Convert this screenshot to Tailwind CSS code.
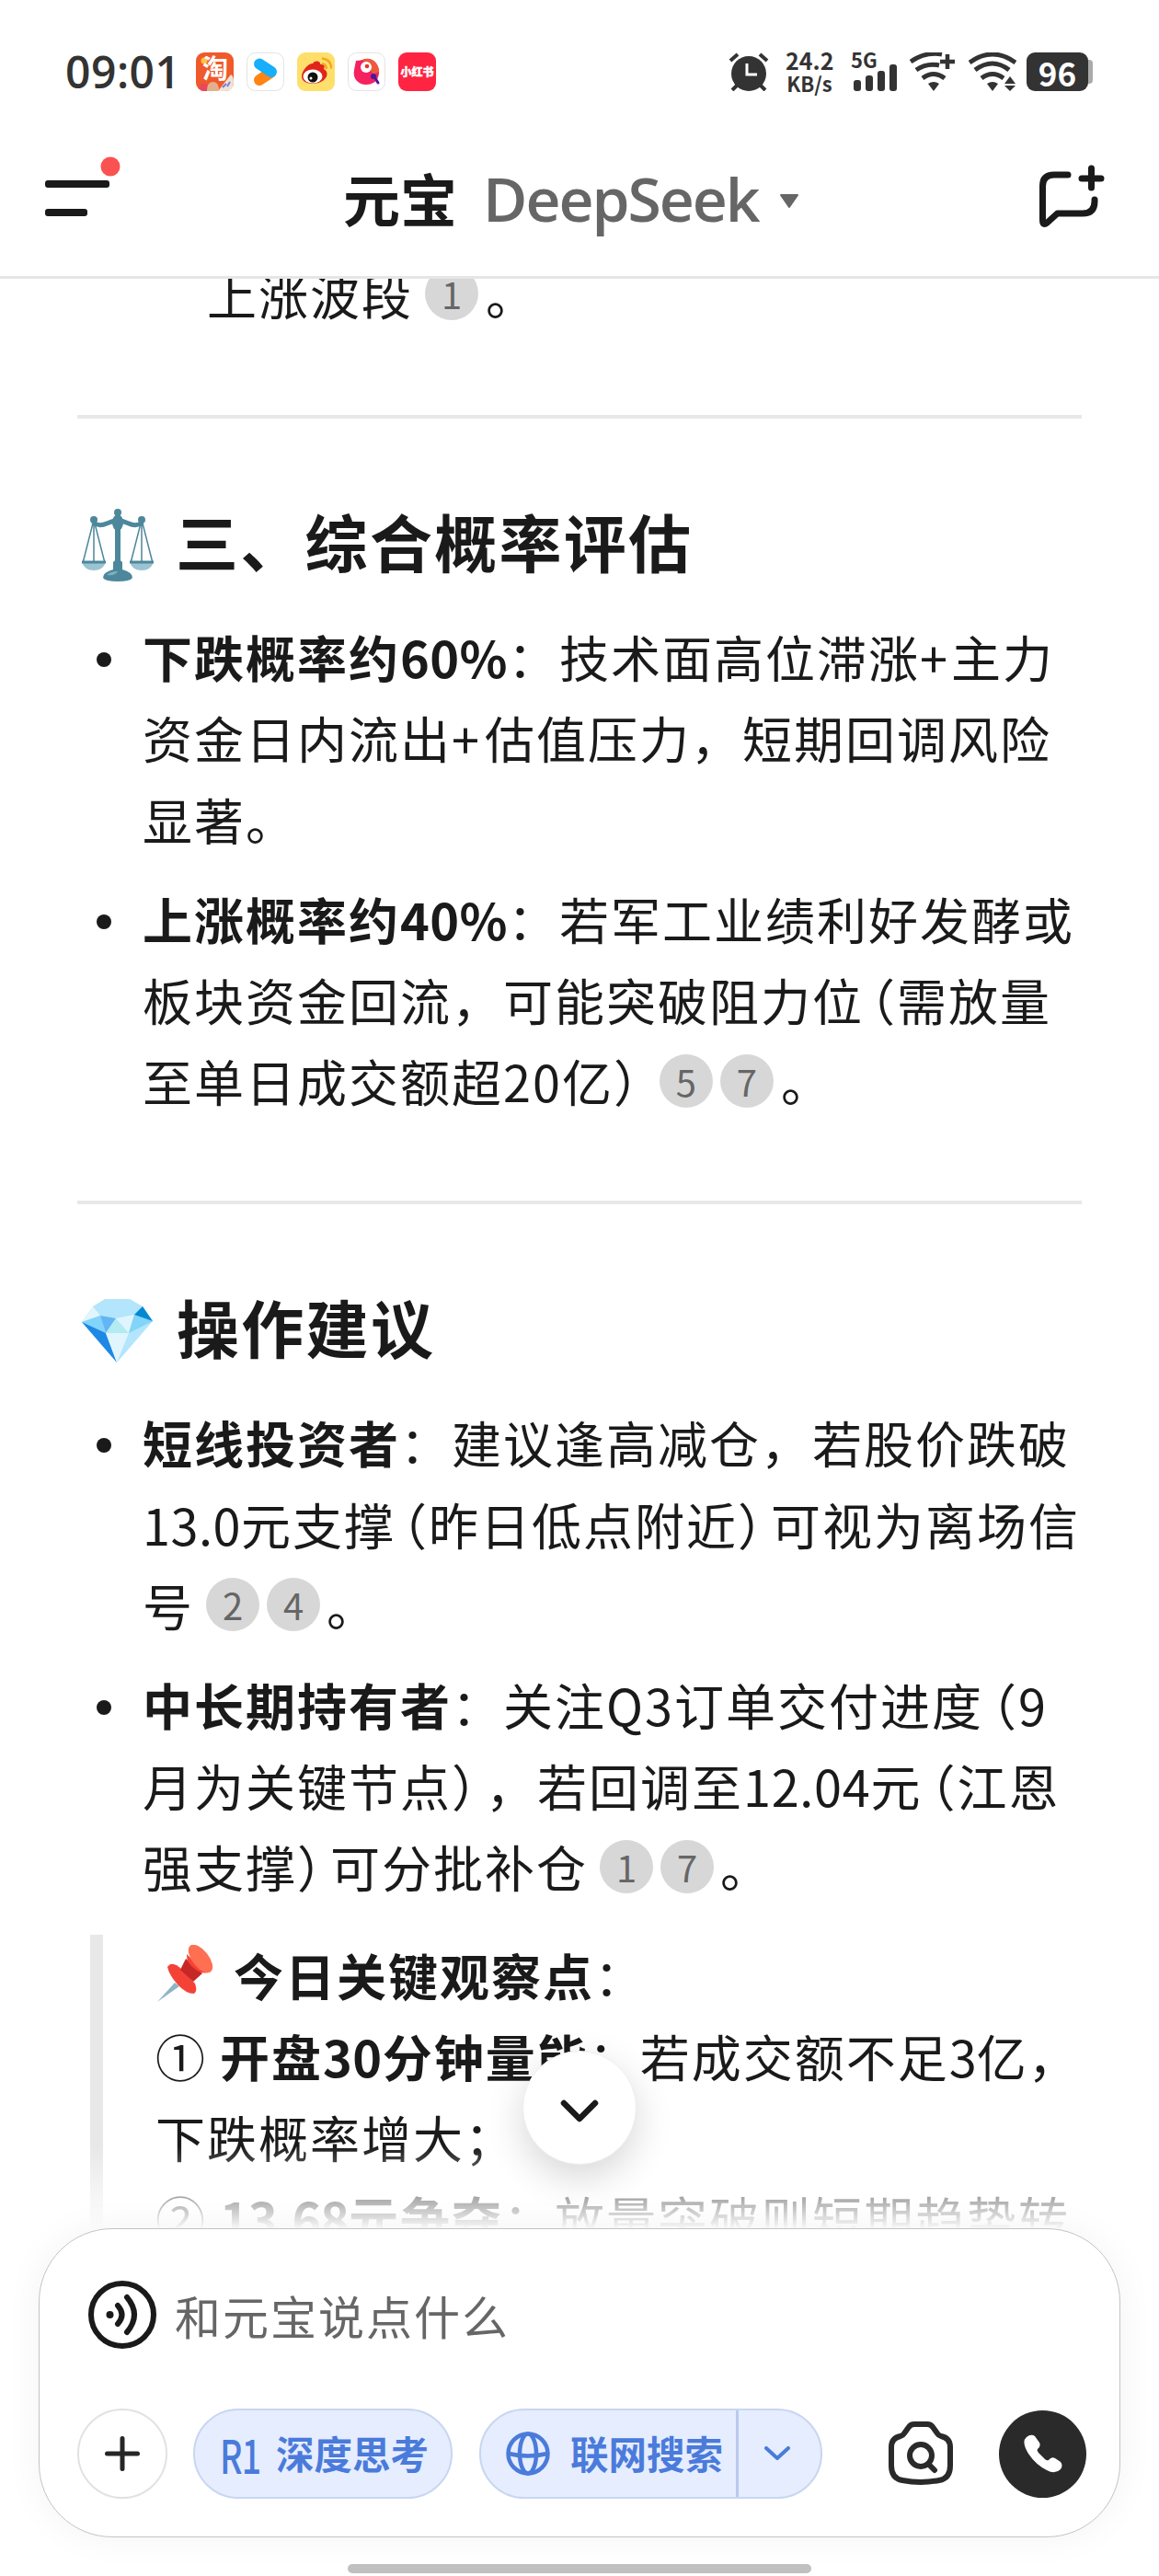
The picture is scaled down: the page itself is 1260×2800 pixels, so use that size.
<!DOCTYPE html>
<html lang="zh-CN">

<head>
    <meta charset="UTF-8">
    <meta name="viewport" content="width=device-width, initial-scale=1.0">
    <title>元宝</title>
    <!-- Tailwind CSS -->
    <script src="https://cdn.jsdelivr.net/npm/@tailwindcss/browser@4"></script>
</head>

<body class="bg-white font-['Noto_Sans_CJK_SC',sans-serif] text-[#1a1a1a]">
    <div class="relative flex h-[2800px] w-[1260px] flex-col overflow-hidden">

        <!-- Status bar -->
        <div class="flex h-[156px] shrink-0 items-center pl-[71px] pr-[70px] text-[#333]">
            <span class="w-[142px] whitespace-nowrap font-['Open_Sans',sans-serif] text-[48px] font-semibold leading-none tracking-[0.500px]">09:01</span>
            <div class="flex gap-[14px]">
                <svg class="h-[42px] w-[41px]" viewBox="0 0 41 42">
                    <rect width="41" height="42" rx="9" fill="#f0592b" />
                    <circle cx="9" cy="9" r="3.500" fill="#ffc53d" />
                    <text x="21" y="28" text-anchor="middle" font-size="28" font-weight="700" fill="#fff">淘</text>
                    <path d="M4 39q0-6 6-5l4 2 1 6H8q-3 0-4-3z" fill="#e8475e" />
                    <path d="M12 41q0-9 7-9 6 0 6 10H12z" fill="#e2b18a" />
                    <path d="M24 42 38 24q3 2 3 8 0 10-9 10z" fill="#efe2d6" />
                    <path d="m29 38 4-4M34 37l3-5" stroke="#7a7fd0" stroke-width="2" />
                </svg>
                <svg class="h-[42px] w-[41px]" viewBox="0 0 41 42">
                    <rect x=".5" y=".5" width="40" height="41" rx="9" fill="#fff" stroke="#e3e3e3" />
                    <path d="M14 30 26 22" stroke="#ff8412" stroke-width="12" stroke-linecap="round" />
                    <path d="M14 12.500 27 21" stroke="#17aefc" stroke-width="12" stroke-linecap="round" />
                </svg>
                <svg class="h-[42px] w-[41px]" viewBox="0 0 41 42">
                    <rect width="41" height="42" rx="9" fill="#ffdf6b" />
                    <path d="M5 26c0-6 7-14 12-14 2-4 9-3 8 1 4-1 6 1 4 5 4 2 5 7 1 11-6 7-25 7-25-3z" fill="#e1251b" />
                    <ellipse cx="17" cy="26" rx="10.500" ry="7.500" fill="#fff" />
                    <circle cx="17" cy="27" r="5.500" fill="#111" />
                    <circle cx="15" cy="28" r="1.500" fill="#fff" />
                    <path d="M27 6.500q10 1 10 11M27 12q5 1 5 6" fill="none" stroke="#f6a623" stroke-width="2.500" />
                </svg>
                <svg class="h-[42px] w-[41px]" viewBox="0 0 41 42">
                    <rect x=".5" y=".5" width="40" height="41" rx="9" fill="#fff" stroke="#e3e3e3" />
                    <path d="M9 9q4 0 7-1c10-4 19 4 18 15-1 9-8 12-14 12-8 0-15-6-13-16q1-5 2-10z" fill="#f5225f" />
                    <path d="M16 8c9-4 18 3 18 13l-6 3z" fill="#ee5a3c" />
                    <circle cx="20" cy="16" r="6" fill="#fff" />
                    <circle cx="21" cy="15" r="2.300" fill="#e5352c" />
                    <path d="m28 25 5 8" stroke="#4b1a9c" stroke-width="3" stroke-linecap="round" />
                    <circle cx="28" cy="26" r="3" fill="#4b1a9c" />
                </svg>
                <svg class="h-[42px] w-[41px]" viewBox="0 0 41 42">
                    <rect width="41" height="42" rx="9" fill="#ff2442" />
                    <text x="20.500" y="26" text-anchor="middle" font-size="12" font-weight="900" fill="#fff" stroke="#fff" stroke-width=".4">小红书</text>
                </svg>
            </div>

            <div class="ml-auto flex items-center">
                <svg class="h-[42px] w-[44px]" viewBox="0 0 44 42" fill="none" stroke="#333">
                    <circle cx="22" cy="23" r="19" fill="#333" stroke="none" />
                    <path d="M2 9 10 2M42 9 34 2" stroke-width="4" />
                    <path d="m9 36-5 5M35 36l5 5" stroke-width="4" />
                    <path d="M20 12v12h11" stroke="#fff" stroke-width="3" />
                </svg>
                <div class="ml-[18px] w-[52px] text-center text-[25px] font-bold leading-[25px]">
                    <div>24.2</div>
                    <div class="text-[22px]">KB/s</div>
                </div>
                <svg class="ml-[20px] h-[42px] w-[51px] overflow-visible" viewBox="0 0 51 42" fill="#333">
                    <text x="-1" y="17" font-size="22" font-weight="700">5G</text>
                    <rect x="2" y="30" width="8" height="12" rx="3" />
                    <rect x="15" y="25" width="8" height="17" rx="3" />
                    <rect x="28" y="20" width="8" height="22" rx="3" />
                    <rect x="41" y="13" width="8" height="29" rx="3" />
                </svg>
                <svg class="ml-[12px] h-[42px] w-[52px]" viewBox="0 0 52 42" fill="none" stroke="#333" stroke-width="5">
                    <path d="M1 10q16-11 34-8M7 19q12-8 25-5M14 28q12-9 24 0" />
                    <path d="m20 34q6-4 12 0l-6 8z" fill="#333" stroke="none" />
                    <path d="M33 10h16M41 2v16" stroke-width="4.500" />
                </svg>
                <svg class="ml-[12px] h-[42px] w-[52px]" viewBox="0 0 52 42" fill="none" stroke="#333" stroke-width="5">
                    <path d="M1 11q25-18 50 0M7 19q19-14 37 0M14 28q12-9 24 0" />
                    <path d="m20 34q6-4 12 0l-6 8zM45 26l6 8H39zM39 36h12l-6 6z" fill="#333" stroke="none" />
                </svg>
                <div class="ml-[11px] mr-[2px] flex items-center">
                    <div class="flex h-[42px] w-[67px] items-center justify-center rounded-[9px] bg-[#333] text-[35px] font-bold leading-none text-white">96</div>
                    <div class="h-[26px] w-[5px] rounded-r-[4px] bg-[#aaa]"></div>
                </div>
            </div>
        </div>

        <!-- Header -->
        <header class="relative flex h-[147px] shrink-0 items-center border-b-[3px] border-[#e6e6e6] pb-[26px] pl-[49px] pr-[59px]">
            <svg class="-mt-[24px] h-[66px] w-[82px]" viewBox="0 0 82 66">
                <rect y="26" width="70" height="8" rx="3" fill="#1a1a1a" />
                <rect y="57" width="46" height="8" rx="3" fill="#1a1a1a" />
                <circle cx="71" cy="11" r="10.500" fill="#fa5151" />
            </svg>
            <div class="ml-[242px] flex items-center">
                <span class="text-[62px] font-bold leading-none">元宝</span>
                <span class="ml-[28px] w-[304px] whitespace-nowrap font-['Open_Sans',sans-serif] text-[66px] font-semibold leading-none tracking-[-2px] text-[#666]">DeepSeek</span>
                <svg class="ml-[18px] mt-[8px] h-[16px] w-[22px]" viewBox="0 0 22 16">
                    <path d="M2 1h18l-9 13z" fill="#666" stroke="#666" stroke-width="2" stroke-linejoin="round" />
                </svg>
            </div>
            <svg class="-mt-[4px] ml-auto h-[72px] w-[72px]" viewBox="0 0 72 72" fill="none" stroke="#1a1a1a" stroke-width="7" stroke-linecap="round" stroke-linejoin="round">
                <path d="M32 13H17Q4.500 13 4.500 25V62q0 7 5 3l11-10H48q13 0 13-13V40" />
                <path d="M47 17h21M57.500 6v21" />
            </svg>
        </header>

        <!-- Answer -->
        <main class="relative h-[2120px] shrink-0 overflow-hidden px-[84px] text-[54px] leading-[88.2px] tracking-[2px] [text-spacing-trim:space-all]">
            <p class="-mt-[27px] pl-[141px]">上涨波段<span class="relative -top-[9px] ml-[13px] mr-2 inline-flex size-[58px] items-center justify-center rounded-full bg-[#d7d7d7] align-middle text-[40px] leading-none tracking-normal text-[#666]">1</span>。</p>
            <hr class="mt-[87px] border-t-4 border-[#e8e8e8]">

            <h2 class="mt-[85px] flex h-[100px] items-center pb-[5px] text-[68px] font-bold leading-[95px] tracking-[2.300px]">
                <svg class="ml-[4px] mr-[23px] mt-[9px] h-[80px] w-[80px]" viewBox="0 0 80 80" fill="none" stroke="#4d879b">
                    <path d="M14 13 2 60M14 13v47M14 13l12 47M66 13 54 60M66 13v47M66 13l12 47" stroke-width="1.500" />
                    <path d="M13 16q7 5 15 1 8-3 12-4 4 1 12 4 8 4 15-1" stroke-width="5" />
                    <path d="M40 16v50" stroke-width="6" />
                    <path d="M1 59h26q-3 9-13 9T1 59zM53 59h26q-3 9-13 9t-13-9z" fill="#9cc3d1" stroke="none" />
                    <path d="M1 59h26M53 59h26" stroke-width="3" />
                    <g fill="#4d879b" stroke="none">
                        <circle cx="14" cy="13" r="4" /><circle cx="66" cy="13" r="4" /><circle cx="40" cy="5" r="4" />
                        <ellipse cx="40" cy="16" rx="6" ry="9" />
                        <path d="M35 59q5-6 10 0v8q11 3 11 9-2 4-16 4t-16-4q0-6 11-9z" />
                    </g>
                    <path d="M28 73q4-4 12-4-2 5-12 4z" fill="#7fb0c2" stroke="none" />
                </svg>
                三、综合概率评估
            </h2>
            <ul class="mt-[30px] flex flex-col gap-[20px] whitespace-nowrap">
                <li class="relative pl-[71px]">
                    <i class="absolute left-[21px] top-[39px] size-4 rounded-full bg-[#1a1a1a]"></i>
                    <b>下跌概率约<span class="tracking-[0.400px]">60%</span></b>：技术面高位滞涨<span class="tracking-[4px]">+</span>主力<br>
                    资金日内流出<span class="tracking-[6px]">+</span>估值压力，短期回调风险<br>
                    显著。
                </li>
                <li class="relative pl-[71px]">
                    <i class="absolute left-[21px] top-[39px] size-4 rounded-full bg-[#1a1a1a]"></i>
                    <b>上涨概率约<span class="tracking-[0.400px]">40%</span></b>：若军工业绩利好发酵或<br>
                    板块资金回流，可能突破阻力位<span class="-ml-5">（</span>需放量<br>
                    至单日成交额超20亿<span class="-mr-5">）</span><span class="relative -top-[9px] ml-[14px] mr-2 inline-flex size-[58px] items-center justify-center rounded-full bg-[#d7d7d7] align-middle text-[40px] leading-none tracking-normal text-[#666]">5</span><span class="relative -top-[9px] mr-2 inline-flex size-[58px] items-center justify-center rounded-full bg-[#d7d7d7] align-middle text-[40px] leading-none tracking-normal text-[#666]">7</span>。
                </li>
            </ul>
            <hr class="mt-[86px] border-t-4 border-[#e8e8e8]">

            <h2 class="mt-[85px] flex h-[100px] items-center pb-[5px] text-[68px] font-bold leading-[95px] tracking-[2.300px]">
                <svg class="ml-[5px] mr-[26px] mt-[8px] h-[70px] w-[77px]" viewBox="0 0 77 70">
                    <path d="M25 1h27l14 8 11 16-39 45L0 26 12 9z" fill="#b3e5fc" />
                    <path d="M12 9 20 19 0 26z" fill="#e1f5fe" />
                    <path d="M0 26 20 19l6 19z" fill="#81d4fa" />
                    <path d="m20 19 17 3-11 16z" fill="#64b5f6" />
                    <path d="m37 22 14 16H26z" fill="#b2ebf2" />
                    <path d="m37 22 20-4-6 20z" fill="#e1f5fe" />
                    <path d="m57 18 20 7-26 13z" fill="#81d4fa" />
                    <path d="m66 9 11 16-20-7z" fill="#0288d1" />
                    <path d="m0 26 26 12 12 32z" fill="#1e88e5" />
                    <path d="M26 38h25L38 70z" fill="#e1f5fe" />
                </svg>
                操作建议
            </h2>
            <ul class="mt-[30px] flex flex-col gap-[20px] whitespace-nowrap">
                <li class="relative pl-[71px]">
                    <i class="absolute left-[21px] top-[39px] size-4 rounded-full bg-[#1a1a1a]"></i>
                    <b>短线投资者</b>：建议逢高减仓，若股价跌破<br>
                    <span class="tracking-[0.500px]">13.0</span>元支撑<span class="-ml-5">（</span>昨日低点附近<span class="-mr-5">）</span>可视为离场信<br>
                    号<span class="relative -top-[9px] ml-[13px] mr-2 inline-flex size-[58px] items-center justify-center rounded-full bg-[#d7d7d7] align-middle text-[40px] leading-none tracking-normal text-[#666]">2</span><span class="relative -top-[9px] mr-[7px] inline-flex size-[58px] items-center justify-center rounded-full bg-[#d7d7d7] align-middle text-[40px] leading-none tracking-normal text-[#666]">4</span>。
                </li>
                <li class="relative pl-[71px]">
                    <i class="absolute left-[21px] top-[39px] size-4 rounded-full bg-[#1a1a1a]"></i>
                    <b>中长期持有者</b>：关注Q3订单交付进度<span class="-ml-[18px]">（</span>9<br>
                    月为关键节点<span class="-mr-[19px]">）</span>，若回调至<span class="tracking-[0.700px]">12.04</span>元<span class="-ml-[18px]">（</span>江恩<br>
                    强支撑<span class="-mr-5">）</span>可分批补仓<span class="relative -top-[9px] ml-[13px] mr-2 inline-flex size-[58px] items-center justify-center rounded-full bg-[#d7d7d7] align-middle text-[40px] leading-none tracking-normal text-[#666]">1</span><span class="relative -top-[9px] mr-[7px] inline-flex size-[58px] items-center justify-center rounded-full bg-[#d7d7d7] align-middle text-[40px] leading-none tracking-normal text-[#666]">7</span>。
                </li>
            </ul>

            <blockquote class="ml-[14px] mt-[29px] whitespace-nowrap border-l-[14px] border-[#e8e8e8] pl-[57px]">
                <svg class="mr-[21px] inline-block h-[64px] w-[64px] align-[-8px]" viewBox="0 0 64 64">
                    <path d="M21 41 2 62l24-17z" fill="#8fb4c6" />
                    <path d="M13 24q5-8 16 3l14 15q3 8-1 11-9 0-18-10T13 24z" fill="#f44336" />
                    <path d="m33 15 18 16-10 9-14-13z" fill="#c62828" />
                    <path d="M34 10q-1 10 10 17 9 6 15 2-9-2-15-9-7-7-10-10z" fill="#f44336" />
                    <ellipse cx="49" cy="15" rx="9" ry="18" transform="rotate(-38 49 15)" fill="#ff6f52" />
                </svg><b>今日关键观察点</b>：<br>
                ① <b>开盘<span class="tracking-[0.400px]">30</span>分钟量能</b>：若成交额不足<span class="tracking-normal">3</span>亿，<br>
                下跌概率增大；<br>
                ② <b><span class="tracking-[-1px]">13.68</span>元争夺</b>：放量突破则短期趋势转
            </blockquote>

            <!-- Fade above the composer -->
            <div class="absolute inset-x-0 bottom-0 h-[90px] bg-linear-to-b from-white/0 to-white"></div>
        </main>

        <!-- Scroll to bottom -->
        <button class="absolute left-[568px] top-[2229px] flex size-[124px] items-center justify-center rounded-full border border-[#eee] bg-white shadow-[0_14px_40px_rgba(0,0,0,0.16)]">
            <svg class="mt-2 h-[26px] w-[42px]" viewBox="0 0 42 26" fill="none" stroke="#1a1a1a" stroke-width="6.500" stroke-linecap="round" stroke-linejoin="round">
                <path d="m4 4 17 17L38 4" />
            </svg>
        </button>

        <!-- Composer -->
        <div class="relative mx-[42px] -mt-px h-[336px] shrink-0 rounded-[80px] border border-[#c4c4c4] bg-white px-[41px] pt-[56px] shadow-[0_0_40px_rgba(0,0,0,0.05)]">
            <div class="flex items-center pl-[12px]">
                <svg class="h-[74px] w-[74px]" viewBox="0 0 74 74" fill="none" stroke="#1a1a1a" stroke-width="6" stroke-linecap="round">
                    <circle cx="37" cy="37" r="34" />
                    <circle cx="23.500" cy="37" r="4" fill="#1a1a1a" stroke="none" />
                    <path d="M32 27q9 10 0 20M42 18q16 19 0 38" />
                </svg>
                <span class="ml-[20px] text-[50px] leading-[74px] tracking-[2px] text-[#666]">和元宝说点什么</span>
            </div>
            <div class="mt-[65px] flex h-[98px] items-center">
                <button class="flex size-[98px] shrink-0 items-center justify-center rounded-full border-2 border-[#e2e2e2]">
                    <svg class="size-[38px]" viewBox="0 0 38 38" stroke="#262626" stroke-width="5" stroke-linecap="round">
                        <path d="M2.500 19h33M19 2.500v33" />
                    </svg>
                </button>
                <button class="ml-[28px] flex h-[98px] w-[282px] shrink-0 items-center rounded-full border-2 border-[#c8d6f1] bg-[#e6edff] pl-[27px] text-[#4a7bdb]">
                    <span class="w-[61px] text-left leading-none"><span class="inline-block origin-left scale-x-75 text-[50px] font-medium tracking-[-1px]">R1</span></span>
                    <span class="whitespace-nowrap text-[41.500px] font-bold leading-none">深度思考</span>
                </button>
                <button class="ml-[29px] flex h-[98px] w-[373px] shrink-0 items-center rounded-full border-2 border-[#c8d6f1] bg-[#e6edff] pl-[27px] text-[#4a7bdb]">
                    <svg class="size-[48px]" viewBox="0 0 48 48" fill="none" stroke="#4a7bdb" stroke-width="4.500">
                        <circle cx="24" cy="24" r="21.500" />
                        <ellipse cx="24" cy="24" rx="9" ry="21.500" />
                        <path d="M3 24q21 5 42 0" />
                    </svg>
                    <span class="ml-[22px] whitespace-nowrap text-[41.500px] font-bold leading-none">联网搜索</span>
                    <span class="ml-[14px] h-full w-[3px] bg-[#b9caed]"></span>
                    <svg class="ml-[28px] h-[16px] w-[28px]" viewBox="0 0 28 16" fill="none" stroke="#4a7bdb" stroke-width="4" stroke-linecap="round" stroke-linejoin="round">
                        <path d="m2 2 12 11L26 2" />
                    </svg>
                </button>
                <svg class="ml-[72px] h-[70px] w-[70px] shrink-0" viewBox="0 0 70 70" fill="none" stroke="#2a2a2a" stroke-width="6" stroke-linejoin="round">
                    <path d="M22 6q2-3 6-3h14q4 0 6 3l5 7q1 2 4 3 10 2 10 12v20q0 14-12 16-20 4-40 0Q3 62 3 48V28q0-10 10-12 3-1 4-3z" />
                    <circle cx="35" cy="37" r="12" />
                    <path d="m43 46 7 7" stroke-linecap="round" />
                </svg>
                <div class="ml-[50px] flex size-[95px] shrink-0 items-center justify-center rounded-full bg-[#2a2a2a]">
                    <svg class="size-[42px]" viewBox="0 0 42 42" fill="#fff">
                        <path d="M3 3q5-4 9-1l5 7q2 4-2 7-1 2 1 4l7 7q2 2 4 1 3-4 7-2l6 4q3 4 0 8-6 6-15 1Q13 33 5 21-3 8 3 3z" />
                    </svg>
                </div>
            </div>
        </div>
        <div class="absolute bottom-[3px] left-[378px] h-[10px] w-[504px] rounded-full bg-[#c0c0c0]"></div>
    </div>
</body>

</html>
